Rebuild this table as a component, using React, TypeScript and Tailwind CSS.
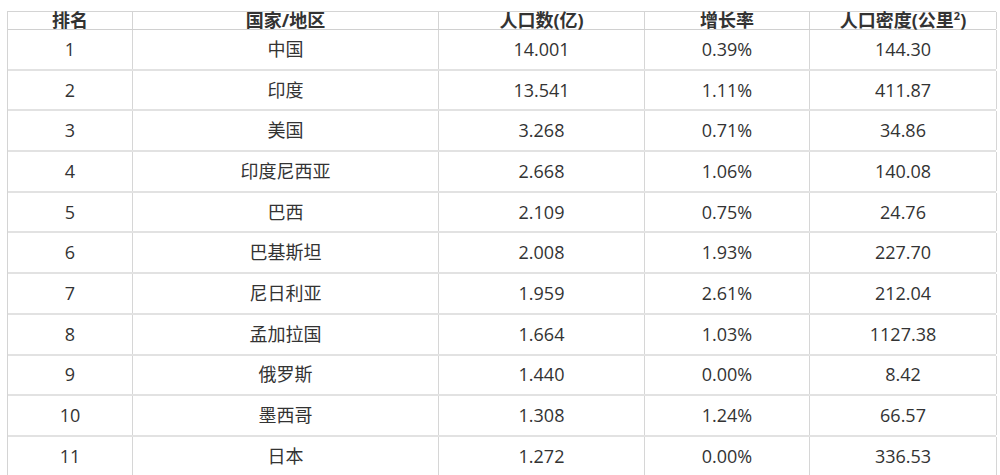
const rows = [
  ["1", "中国", "14.001", "0.39%", "144.30"],
  ["2", "印度", "13.541", "1.11%", "411.87"],
  ["3", "美国", "3.268", "0.71%", "34.86"],
  ["4", "印度尼西亚", "2.668", "1.06%", "140.08"],
  ["5", "巴西", "2.109", "0.75%", "24.76"],
  ["6", "巴基斯坦", "2.008", "1.93%", "227.70"],
  ["7", "尼日利亚", "1.959", "2.61%", "212.04"],
  ["8", "孟加拉国", "1.664", "1.03%", "1127.38"],
  ["9", "俄罗斯", "1.440", "0.00%", "8.42"],
  ["10", "墨西哥", "1.308", "1.24%", "66.57"],
  ["11", "日本", "1.272", "0.00%", "336.53"],
];

const cols = "grid grid-cols-[125px_306px_206px_165px_187px]";

export default function App() {
  return (
    <div
      className="w-[1000px] h-[475px] overflow-hidden bg-white text-[#333]"
      style={{ fontFamily: '"Open Sans", "Noto Sans CJK SC", sans-serif' }}
    >
      <div className="ml-[7px] mt-[11px] w-[989px] border-l border-t border-[#d4d4d4]">
        {/* header */}
        <div className={`${cols} h-[18px] border-b border-[#d0d0d0]`}>
          {["排名", "国家/地区", "人口数(亿)", "增长率"].map((h) => (
            <div key={h} className="border-r border-[#d4d4d4] flex items-center justify-center text-[18px] font-bold leading-[17px]">
              {h}
            </div>
          ))}
          <div className="border-r border-[#d4d4d4] flex items-center justify-center text-[18px] font-bold leading-[17px]">
            人口密度(公里<sup className="text-[11px] -top-[5px]">2</sup>)
          </div>
        </div>

        {rows.map((r) => (
          <div key={r[0]} className={`${cols} h-[40.7px] border-b-2 border-[#e2e2e2]`}>
            {r.map((c, i) => (
              <div key={i} className="border-r border-[#d6d6d6] flex items-center justify-center text-[18px]">
                {c}
              </div>
            ))}
          </div>
        ))}
      </div>
    </div>
  );
}
